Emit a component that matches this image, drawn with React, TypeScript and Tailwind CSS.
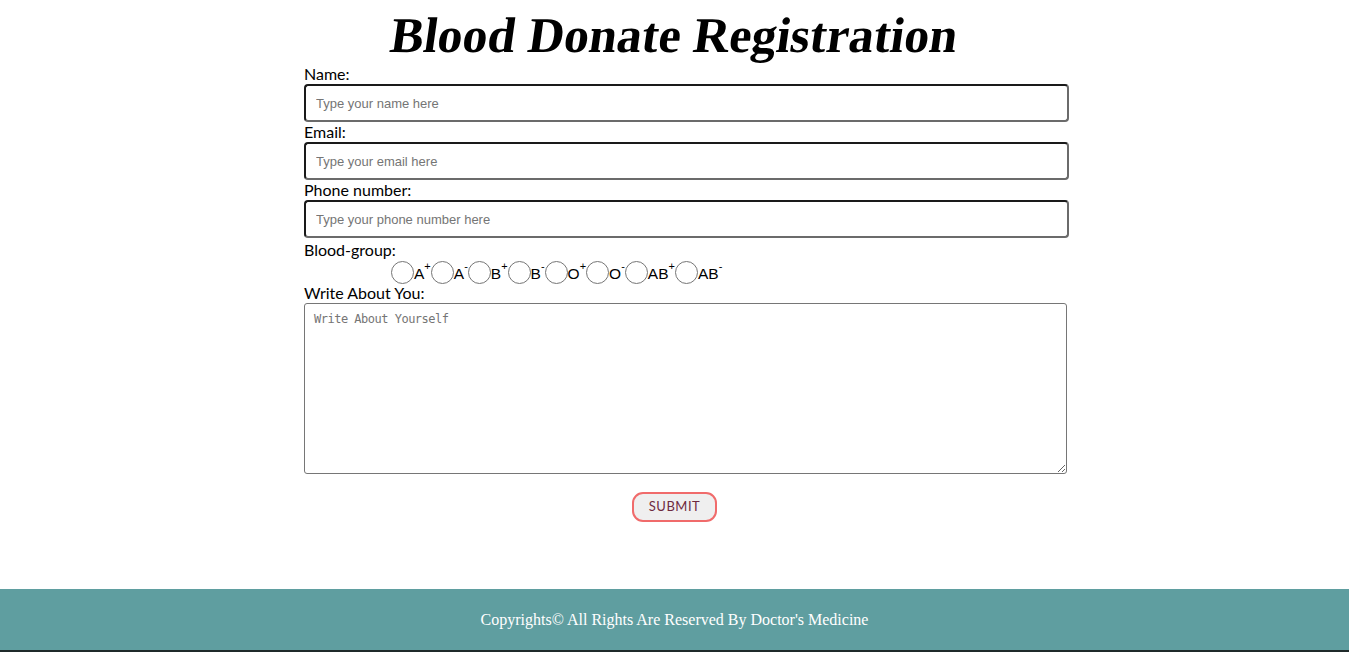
import React from "react";

const groups: { l: string; s: string }[] = [
  { l: "A", s: "+" },
  { l: "A", s: "-" },
  { l: "B", s: "+" },
  { l: "B", s: "-" },
  { l: "O", s: "+" },
  { l: "O", s: "-" },
  { l: "AB", s: "+" },
  { l: "AB", s: "-" },
];

const inputCls =
  "block w-full h-[38px] rounded-[4px] border-2 border-t-[#1a1a1a] border-l-[#1a1a1a] border-r-[#6b6b6b] border-b-[#6b6b6b] px-[10px] text-[13px] outline-none placeholder:text-[#757575] [font-family:'Liberation_Sans',Arial,sans-serif]";

export default function App() {
  return (
    <div className="min-h-screen bg-white flex flex-col [font-family:Lato,'Open_Sans',sans-serif] text-black">
      <h1 className="h-[64px] pt-[6px] text-center text-[50px] leading-[58px] font-bold [font-family:'Liberation_Serif','Times_New_Roman',serif]">
        <span className="inline-block -skew-x-[8deg]">Blood Donate Registration</span>
      </h1>
      <form className="w-[765px] ml-[304px] flex flex-col text-[16px]">
        <label className="leading-[20px]">Name:</label>
        <input className={inputCls} placeholder="Type your name here" />
        <label className="leading-[20px]">Email:</label>
        <input className={inputCls} placeholder="Type your email here" />
        <label className="leading-[20px]">Phone number:</label>
        <input className={inputCls} placeholder="Type your phone number here" />
        <label className="leading-[20px] mt-[2px]">Blood-group:</label>
        <div className="flex items-center pl-[87px] h-[24px] [font-family:'Liberation_Sans',Arial,sans-serif] text-[15.5px]">
          {groups.map((g, i) => (
            <span key={i} className="flex items-center">
              <span className="block w-[23px] h-[23px] rounded-full border border-[#767676] bg-white" />
              <span className="leading-none flex items-start">
                <span className="mt-[3px]">{g.l}</span>
                <span className="text-[11px] leading-none -mt-[2px]">{g.s}</span>
              </span>
            </span>
          ))}
        </div>
        <label className="leading-[18px]">Write About You:</label>
        <textarea
          className="mt-[1px] block w-[763px] h-[171px] rounded-[3px] border border-[#767676] px-[9px] pt-[6px] text-[12px] tracking-[-0.5px] outline-none placeholder:text-[#757575] [font-family:'DejaVu_Sans_Mono','Liberation_Mono',monospace]"
          placeholder="Write About Yourself"
        />
        <div className="flex justify-center mt-[18px] -ml-[24px]">
          <button
            type="button"
            className="w-[85px] h-[30px] rounded-[11px] border-2 border-[#f06b6b] bg-[#efefef] text-[13px] tracking-[0.5px] text-[#6e2a40]"
          >
            SUBMIT
          </button>
        </div>
      </form>
      <footer className="mt-[67px] h-[63px] bg-[#5f9ea0] border-b-2 border-[#1f2a2a] flex items-center justify-center text-white text-[16px] [font-family:'Liberation_Serif','Times_New_Roman',serif]">
        Copyrights© All Rights Are Reserved By Doctor's Medicine
      </footer>
    </div>
  );
}
